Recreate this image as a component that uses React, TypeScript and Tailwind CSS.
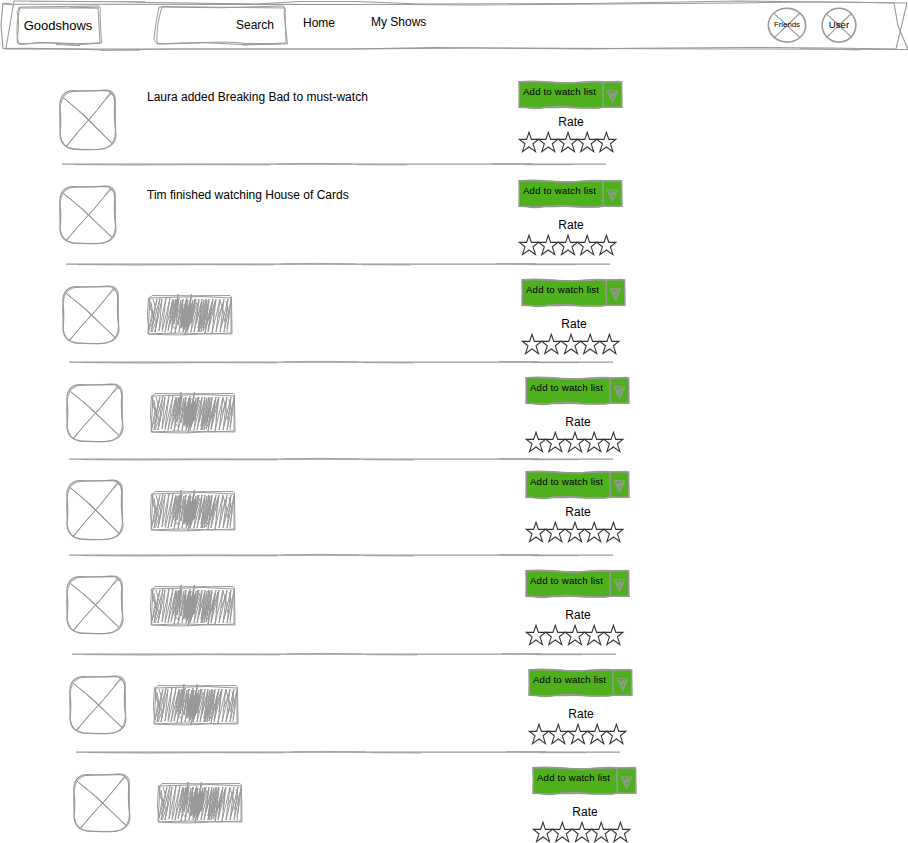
const FONT = "font-['Liberation_Sans',Arial,sans-serif]";

type Row = {
  indent: string;
  iconTop: string;
  iconHeight: number;
  bodyTop: string;
  actionTop: string;
  rateTop: string;
  height: string;
  line?: string;
  text?: string;
};

const rows: Row[] = [
  { indent: "pl-[59px]", iconTop: "pt-[37px]", iconHeight: 62, bodyTop: "pt-[37px]", actionTop: "pt-[28px]", rateTop: "mt-[6px]", height: "h-[114px]", line: "ml-[62px]", text: "Laura added Breaking Bad to must-watch" },
  { indent: "pl-[59px]", iconTop: "pt-[19px]", iconHeight: 60, bodyTop: "pt-[21px]", actionTop: "pt-[13px]", rateTop: "mt-[10px]", height: "h-[100px]", line: "ml-[66px]", text: "Tim finished watching House of Cards" },
  { indent: "pl-[62px]", iconTop: "pt-[19px]", iconHeight: 60, bodyTop: "pt-[28px] pl-px", actionTop: "pt-[12px]", rateTop: "mt-[10px]", height: "h-[98px]", line: "ml-[69px]" },
  { indent: "pl-[66px]", iconTop: "pt-[19px]", iconHeight: 60, bodyTop: "pt-[28px]", actionTop: "pt-[12px]", rateTop: "mt-[10px]", height: "h-[97px]", line: "ml-[69px]" },
  { indent: "pl-[66px]", iconTop: "pt-[18px]", iconHeight: 62, bodyTop: "pt-[29px]", actionTop: "pt-[9px]", rateTop: "mt-[6px]", height: "h-[96px]", line: "ml-[69px]" },
  { indent: "pl-[66px]", iconTop: "pt-[18px]", iconHeight: 60, bodyTop: "pt-[28px]", actionTop: "pt-[12px]", rateTop: "mt-[10px]", height: "h-[99px]", line: "ml-[72px]" },
  { indent: "pl-[69px]", iconTop: "pt-[19px]", iconHeight: 60, bodyTop: "pt-[28px]", actionTop: "pt-[12px]", rateTop: "mt-[10px]", height: "h-[98px]", line: "ml-[76px]" },
  { indent: "pl-[73px]", iconTop: "pt-[19px]", iconHeight: 60, bodyTop: "pt-[28px]", actionTop: "pt-[12px]", rateTop: "mt-[10px]", height: "h-[89px]" },
];

function Picture({ height }: { height: number }) {
  return (
    <svg width="60" height={height} viewBox="0 0 60 62" preserveAspectRatio="none" fill="none" stroke="#999" strokeWidth="1.2">
      <path d="M13 1.6 Q30 2.4 46 1.4 Q55.5 2 55.8 13 Q54.6 30 57 46 Q56 58 43 60 Q28 61.4 14 59.8 Q2 58 1 46 Q2.6 30 0.8 17 Q1 3 13 1.6Z" />
      <path d="M14 2.4 Q34 1.8 47 1 Q56 0.8 56.4 10 L56.4 31 Q58 51 51 56.5 Q45 61.5 32 60.5 L14 60.2 Q3 58 1.2 46 L0.6 26 Q0.6 12 6 6 Q10 2 18 2" strokeWidth="0.9" />
      <path d="M3.5 8 L24 25 L29 30 L42 43 L53 54 M4 8.5 Q17 19 27 29 L53 54.5" strokeWidth="1" />
      <path d="M52.5 4 Q42 15 35 25 Q29 32 20 42 L6.5 58 M50.5 4.5 Q43 16 33 27 L18 44 L8 57" strokeWidth="1" />
      <path d="M50 4 L54 6 M6 57 L9 58" strokeWidth="0.8" />
    </svg>
  );
}

function Scribble() {
  return (
    <svg width="88" height="44" viewBox="0 0 88 44" fill="none" stroke="#999" strokeWidth="1">
      <path d="M5 1.5 Q36 2 83 1.5 Q85 2 84.5 6 L85 40 L58 39.5 Q35 42 2 40 Q-1 23 1.5 4 L54 2.5 L84 4 V39 Q61 41 38 39 Q20 39 1 40 Q2 23 3 3 M3 3.5 L5 1.5" />
      <path d="M2 5 L5 19 L2 36 L10 5 L7 21 L4 38 L13 4 L8 38 L15 5 L12 37 L19 4 L15 36 M2 12 L9 27 L5 38 M6 5 L11 22 L8 38 M4 8 L7 26 L4 32" />
      <path d="M15 38 L23 4 L18 38 L26 5 L21 37 L29 5 L24 39 L32 4 L28 39 L36 5 L32 38 L40 4 L36 38 L44 4 L40 38 L48 5 L44 38 L52 5 L47 38 L55 5 L51 38 L59 5 L54 38 L62 5 L58 39 L66 5 L61 38 L69 5 L65 39 L73 5 L69 38 L77 5 L73 38 L81 5 L77 38 L84 6 L80 38" />
      <path d="M25 8 L23 24 L27 6 L25 28 L30 5 L27 30 L31 0 L29 27 L34 6 L31 31 L36 5 L34 29 L39 6 L34 34 L41 6 L37 32 L44.5 0 L40 33 L46 6 L42 32 L49 5 L44 29 L50 8" />
      <path d="M36 10 L34 26 L39 8 L35 32 L41 12 L37 36 L43 10 L38 41 L45 9 L41 35 L46 12 L43 30 L40 11 L38 28 M37 17 L36 35 L42 14 L39 32 L44 11" strokeWidth="1.3" />
      <path d="M52 7 L49 30 L55 8 L51 34 L57 6 L54 32 L60 6 L57 31 L62 7 L59 30 L65 8 L62 27 L68 7 L66 28 M54 20 L52 38 L59 16 L56 37 L64 18 L61 36" />
      <path d="M73 6 L77 20 L74 34 M79 7 L82 22 L80 35 M71 23 L76 10 M81 13 L77 28 M30 15 L23 28 L29 36" />
    </svg>
  );
}

function WatchButton() {
  return (
    <div className="relative h-[30px] w-[106px]">
      <svg className="absolute inset-0" width="106" height="30" viewBox="0 0 106 30" fill="none" stroke="#999">
        <path d="M1 2 L34 1.8 Q43 2 55 2.5 Q67 3 80 1.5 L104 1.5 L103.6 27.6 Q85 28.5 63 27.5 Q35 29 1 27.6Z" fill="#4fb01d" stroke="none" />
        <path d="M1 1.7 Q12 0.7 28 1.7 Q42 4 60 2.5 Q75 1 85 1.7 L103.6 2 L104 27.2 L86 27.2 Q70 29 55 27.2 Q40 26 27 27.2 Q18 29.5 8 27.6 L1 27.2 L1.2 15Z" strokeWidth="1.5" />
        <path d="M2 2 Q18 1.5 32 2.2 L49 3.3 Q64 1.5 82 2.2 L102 1.2 M2 27.2 Q20 28.5 37 27.2 Q60 28.5 82 28" strokeWidth="1" />
        <path d="M85.3 2.5 Q84.5 15 85.5 28" strokeWidth="1.5" />
        <path d="M89.2 10.5 L99.7 11 L94.5 23Z M91 11.5 L94.5 20.5 L98.3 11.5 M92 14.5 L96 15 L95 12 L93 17 L97 14" strokeWidth="1" />
      </svg>
      <span className="absolute left-[5px] top-[6px] w-[73px] overflow-hidden whitespace-nowrap text-[9.7px] leading-3 tracking-[0.15px]">Add to watch list</span>
    </div>
  );
}

function Stars() {
  return (
    <svg className="block" width="100" height="22" viewBox="0 0 100 22" fill="none" stroke="#333" strokeWidth="1.1">
      {[0.5, 19.8, 39.5, 58.7, 77.9].map((x) => (
        <path key={x} transform={`translate(${x} 0)`} d="M10.5 1.3 L12.9 8.4 H20 L14.5 12.8 L17 20.6 L10.5 16 L4 20.6 L6.5 12.8 L0.9 8.4 H8.1Z" />
      ))}
    </svg>
  );
}

function Divider() {
  return (
    <svg className="block" width="545" height="4" viewBox="0 0 545 4" fill="none" stroke="#999">
      <path d="M0 2.1 H544" strokeWidth="1.2" />
      <path d="M12 2.6 Q70 3.5 130 2.7 L208 2.9 M215 1.8 Q250 0.9 290 1.9 M295 2.7 L345 3 M430 1.6 L470 1.7 M463 2.7 H510" strokeWidth="0.8" />
    </svg>
  );
}

function Avatar({ label, size, radius }: { label: string; size: string; radius: number }) {
  return (
    <div className="relative flex h-10 w-10 items-center justify-center">
      <svg className="absolute inset-0" width="40" height="40" viewBox="0 0 40 40" fill="none" stroke="#999" strokeWidth="1.3">
        <ellipse cx="20" cy="20.2" rx={radius} ry="17" />
        <ellipse cx="20" cy="20.2" rx={radius - 0.4} ry="16.6" transform="rotate(12 20 20)" strokeWidth="0.8" />
        <path d="M7 8.5 L19 19 L33 32.5 M7.5 9 L32 32 M33 8.5 L22 19 L7 32.5 M32 8.5 L18 22 L8 32.5" strokeWidth="1" />
      </svg>
      <span className={`relative ${size}`}>{label}</span>
    </div>
  );
}

function Header() {
  return (
    <header className="relative flex h-[52px] w-full">
      <svg className="absolute inset-0" width="908" height="52" viewBox="0 0 908 52" fill="none" stroke="#999" strokeWidth="1.1">
        <path d="M14 1 Q80 1 152 2.5 L256 4 L300 1.5 L356 1.5 L420 4 L590 3.5 L740 1 L907 3 L896 49 Q750 46 590 49 L435 47.5 L350 49 H5" />
        <path d="M14 1 L6 48 M12 4 Q4 3 3 3.5 Q2 12 1 25 L3 48.5 Q60 48 105 50 L180 49 L350 49 L480 48 L740 49 L908 49.5 L898 26 L894 3 Q820 1 740 3 L470 5 L410 4.5 L12 4.2" />
        <path d="M30 1.5 H145 M2 4 L14 5 M100 50.3 H140 M800 48.5 L860 50" strokeWidth="0.8" />
        <path d="M20 7 L99 6 Q101 7 100 14 L101.5 43 L76 45 Q46 41 20 44.5 Q17 44 17 40 Q20 22 17 12Z M18 8 H98 L100 43 Q75 44 60 43 L38 42.5 Q16 46 18 41 Q15 27 20 7 M56 44.5 L80 45.5 M70 7 L99 8" strokeWidth="1" />
        <path d="M159 7 Q220 9 283 6 Q286 7 284 13 L287.5 44 L247 43.5 Q225 41 199 43 L160 44 Q154 43 154 38 Q156 20 159 7 M162 6.5 L285 8 L286 43 Q266 44 240 44.5 L202 42.5 Q179 43 157 44 Q156 25 162 7 M242 45 L281 44" strokeWidth="1" />
      </svg>
      <div className="relative ml-4 flex h-[51px] w-[84px] items-center justify-center text-[13px]">Goodshows</div>
      <div className="relative ml-[54px] flex h-[49px] w-[133px] items-center justify-end pr-[13px] text-[12px]">Search</div>
      <nav className="relative flex text-[12px] leading-4">
        <span className="ml-4 mt-[15px]">Home</span>
        <span className="ml-9 mt-[14px]">My Shows</span>
      </nav>
      <div className="ml-auto mr-[49px] flex gap-3 pt-[5px]">
        <Avatar label="Friends" size="text-[7.8px]" radius={18.8} />
        <Avatar label="User" size="text-[9.7px]" radius={17} />
      </div>
    </header>
  );
}

export default function App() {
  return (
    <main className={`h-[843px] w-[908px] overflow-hidden bg-white text-black ${FONT}`}>
      <Header />
      {rows.map((row, i) => (
        <section key={i} className={`flex flex-col ${row.height}`}>
          <div className={`flex min-h-0 flex-1 ${row.indent}`}>
            <div className={`w-[84px] shrink-0 ${row.iconTop}`}><Picture height={row.iconHeight} /></div>
            <div className={`w-[375px] shrink-0 ${row.bodyTop}`}>
              {row.text ? <p className="pl-1 text-[12px] leading-4">{row.text}</p> : <Scribble />}
            </div>
            <div className={`w-[106px] shrink-0 ${row.actionTop}`}>
              <WatchButton />
              <p className={`text-center text-[12px] leading-3 ${row.rateTop}`}>Rate</p>
              <div className="mt-[3px]"><Stars /></div>
            </div>
          </div>
          {row.line && <div className={row.line}><Divider /></div>}
        </section>
      ))}
    </main>
  );
}
